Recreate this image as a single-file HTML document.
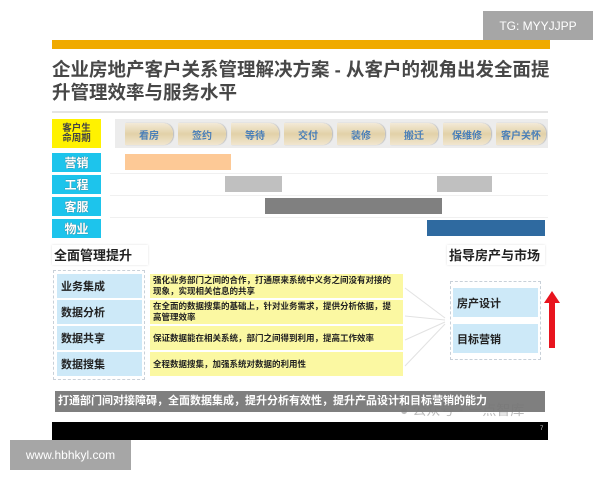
<!DOCTYPE html>
<html><head><meta charset="utf-8"><style>
*{margin:0;padding:0;box-sizing:border-box}
body{width:600px;height:480px;background:#fff;position:relative;overflow:hidden;font-family:"Liberation Sans","Noto Sans CJK SC",sans-serif}
.a{position:absolute}
.c{display:flex;align-items:center;justify-content:center}
.cy{background:#1dc4ec;color:#fff;font-weight:bold;font-size:12px;text-shadow:0 0 1px #555}
.st{position:absolute;top:123px;height:22px;width:48px;background:linear-gradient(#f3ead8,#e2d1a8,#f1e6cf);border-radius:0 10px 10px 0;color:#4a7fb8;font-size:10px;font-weight:bold;display:flex;align-items:center;justify-content:center;box-shadow:1px 0 1px #bbb}
.lb{position:absolute;left:57px;width:85px;background:#cde9f8;font-size:11px;font-weight:bold;color:#222;display:flex;align-items:center;padding-left:4px}
.ds{position:absolute;left:150px;width:253px;background:#fbf8a2;font-size:8.5px;font-weight:bold;color:#222;display:flex;align-items:center;padding-left:3px;line-height:11px}
</style></head><body>
<div class="a c" style="left:483px;top:11px;width:110px;height:29px;background:#a6a6a6;color:#fff;font-size:12px">TG: MYYJJPP</div>
<div class="a" style="left:52px;top:40px;width:498px;height:9px;background:#f0aa00"></div>
<div class="a" style="left:52px;top:58px;width:500px;font-size:18.5px;font-weight:bold;color:#474747;line-height:23px">企业房地产客户关系管理解决方案 - 从客户的视角出发全面提升管理效率与服务水平</div>
<div class="a" style="left:52px;top:111px;width:496px;height:2px;background:#e4e4e4"></div>
<div class="a c" style="left:52px;top:119px;width:49px;height:29px;background:#fff200;font-size:9.5px;font-weight:bold;color:#444;line-height:10px;text-align:center">客户生<br>命周期</div>
<div class="a" style="left:115px;top:119px;width:433px;height:29px;background:#ececec"></div>
<div class="st" style="left:125px">看房</div><div class="st" style="left:178px">签约</div><div class="st" style="left:231px">等待</div><div class="st" style="left:284px">交付</div><div class="st" style="left:337px">装修</div><div class="st" style="left:390px">搬迁</div><div class="st" style="left:443px">保维修</div><div class="st" style="left:496px;width:50px">客户关怀</div>
<div class="a c cy" style="left:52px;top:153px;width:49px;height:19px">营销</div>
<div class="a c cy" style="left:52px;top:175px;width:49px;height:19px">工程</div>
<div class="a c cy" style="left:52px;top:197px;width:49px;height:19px">客服</div>
<div class="a c cy" style="left:52px;top:219px;width:49px;height:19px">物业</div>
<div class="a" style="left:110px;top:173px;width:438px;height:1px;background:#f0f0f0"></div>
<div class="a" style="left:110px;top:195px;width:438px;height:1px;background:#f0f0f0"></div>
<div class="a" style="left:110px;top:217px;width:438px;height:1px;background:#f0f0f0"></div>
<div class="a" style="left:125px;top:154px;width:106px;height:16px;background:#fdc996"></div>
<div class="a" style="left:225px;top:176px;width:57px;height:16px;background:#c0c0c0"></div>
<div class="a" style="left:437px;top:176px;width:55px;height:16px;background:#c0c0c0"></div>
<div class="a" style="left:265px;top:198px;width:177px;height:16px;background:#808080"></div>
<div class="a" style="left:427px;top:220px;width:118px;height:16px;background:#2f6aa0"></div>
<div class="a" style="left:52px;top:245px;width:96px;height:20px;font-size:13px;font-weight:bold;color:#222;padding-left:2px;box-shadow:0 0 2px #ddd">全面管理提升</div>
<div class="a" style="left:447px;top:245px;width:98px;height:20px;font-size:13px;font-weight:bold;color:#222;padding-left:2px;box-shadow:0 0 2px #ddd">指导房产与市场</div>
<div class="a" style="left:53px;top:270px;width:92px;height:110px;border:1px dashed #c8d0d8"></div>
<div class="lb" style="top:274px;height:24px">业务集成</div>
<div class="lb" style="top:300px;height:24px">数据分析</div>
<div class="lb" style="top:326px;height:24px">数据共享</div>
<div class="lb" style="top:352px;height:24px">数据搜集</div>
<div class="ds" style="top:274px;height:24px">强化业务部门之间的合作，打通原来系统中义务之间没有对接的<br>现象，实现相关信息的共享</div>
<div class="ds" style="top:300px;height:24px">在全面的数据搜集的基础上，针对业务需求，提供分析依据，提<br>高管理效率</div>
<div class="ds" style="top:326px;height:24px">保证数据能在相关系统，部门之间得到利用，提高工作效率</div>
<div class="ds" style="top:352px;height:24px">全程数据搜集，加强系统对数据的利用性</div>
<svg class="a" style="left:403px;top:280px" width="50" height="100"><g stroke="#e2e2e2" stroke-width="1" fill="none"><path d="M2 8 L42 38"/><path d="M2 36 L42 40"/><path d="M2 60 L42 42"/><path d="M2 86 L42 44"/></g></svg>
<div class="a" style="left:450px;top:281px;width:91px;height:79px;border:1px dashed #c8d0d8"></div>
<div class="lb" style="left:453px;top:288px;height:29px;width:85px">房产设计</div>
<div class="lb" style="left:453px;top:324px;height:29px;width:85px">目标营销</div>
<svg class="a" style="left:543px;top:290px" width="18" height="60"><path d="M6 12 L12 12 L12 58 L6 58 Z M1 13 L9 1 L17 13 Z" fill="#e8141e"/></svg>
<div class="a" style="left:55px;top:391px;width:490px;height:21px;background:#7f7f7f;color:#fff;font-size:11px;font-weight:bold;padding-left:3px;line-height:21px">打通部门间对接障碍，全面数据集成，提升分析有效性，提升产品设计和目标营销的能力</div>
<div class="a" style="left:52px;top:422px;width:496px;height:18px;background:#000"></div>
<div class="a" style="left:540px;top:426px;color:#ccc;font-size:6px">7</div>
<div class="a" style="left:400px;top:400px;color:rgba(120,120,120,.5);font-size:14px">&#9679; 公众号・一点智库</div>
<div class="a c" style="left:10px;top:440px;width:121px;height:30px;background:#a6a6a6;color:#fff;font-size:12px">www.hbhkyl.com</div>
</body></html>
